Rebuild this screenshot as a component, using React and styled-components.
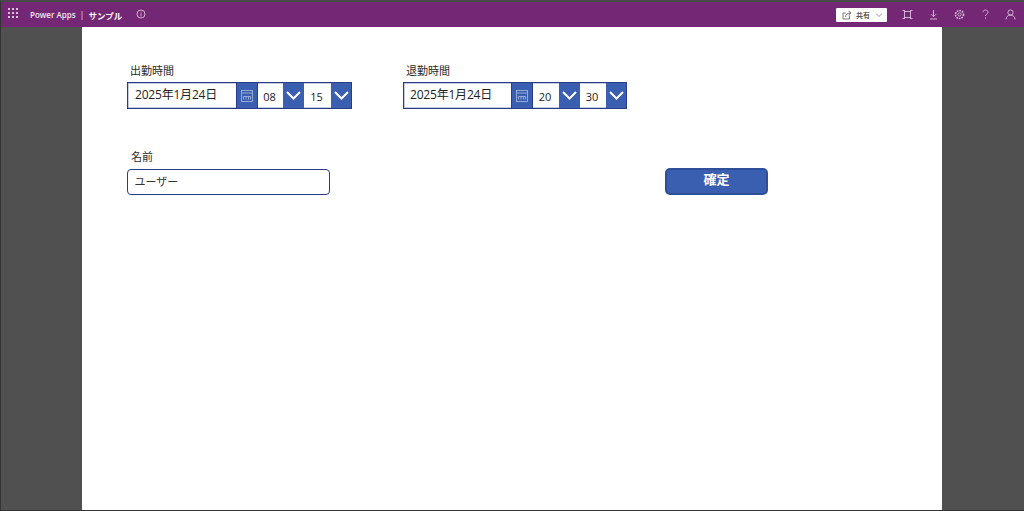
import React from 'react';
import styled, { createGlobalStyle } from 'styled-components';

const GlobalStyle = createGlobalStyle`
  html, body {
    margin: 0;
    padding: 0;
    height: 100%;
    overflow: hidden;
    background: #505050;
  }
  #root {
    height: 100%;
  }
`;

const Frame = styled.div`
  width: 1024px;
  height: 511px;
  box-sizing: border-box;
  display: flex;
  flex-direction: column;
  border-top: 2px solid #4a4a4a;
  border-left: 1px solid #333;
  border-bottom: 1px solid #333;
  background: #505050;
  font-family: 'Open Sans', 'Noto Sans CJK JP', sans-serif;
`;

const TopBar = styled.header`
  height: 25px;
  flex-shrink: 0;
  display: flex;
  align-items: center;
  background: #742774;
  color: #fff;
`;

const Waffle = styled.svg`
  width: 10px;
  height: 10px;
  margin: 0 0 3px 7px;
  fill: #d9bfd9;
`;

const Product = styled.span`
  margin-left: 12px;
  font-size: 8px;
  font-weight: 600;
  color: #f0e6f0;
`;

const Divider = styled.span`
  margin: 0 4px;
  font-size: 9px;
  color: #e6d3e6;
`;

const AppName = styled.span`
  font-size: 8.5px;
  font-weight: 700;
  font-family: 'Noto Sans CJK JP', sans-serif;
`;

const InfoIcon = styled.svg`
  width: 10px;
  height: 10px;
  margin: 0 0 2px 14px;
  fill: none;
  stroke: #d9bfd9;
  stroke-width: 0.9;
`;

const Actions = styled.div`
  margin-left: auto;
  display: flex;
  align-items: center;
`;

const ShareButton = styled.button`
  width: 51px;
  height: 14px;
  padding: 0 0 0 6px;
  margin-right: 15px;
  border: none;
  border-radius: 1px;
  background: #fff;
  display: flex;
  align-items: center;
  gap: 4px;
  font-family: 'Noto Sans CJK JP', sans-serif;
  font-size: 7px;
  font-weight: 500;
  color: #333;
`;

const ShareIcon = styled.svg`
  width: 10px;
  height: 10px;
  fill: none;
  stroke: #555;
  stroke-width: 0.8;
`;

const ShareChevron = styled.svg`
  width: 8px;
  height: 8px;
  margin-left: 1px;
  fill: none;
  stroke: #777;
  stroke-width: 0.8;
`;

const ActionIcon = styled.svg`
  width: 11px;
  height: 11px;
  margin-right: ${props => props.$gap}px;
  fill: none;
  stroke: #d9bfd9;
  stroke-width: 0.9;
`;

const Body = styled.main`
  flex: 1;
  display: flex;
  justify-content: center;
  min-height: 0;
  padding-right: 1px;
`;

const Canvas = styled.div`
  width: 860px;
  box-sizing: border-box;
  background: #fff;
  padding: 36px 0 0 45px;
  display: flex;
  flex-direction: column;
  gap: 40px;
`;

const Row = styled.div`
  display: flex;
  align-items: flex-end;
`;

const Field = styled.div`
  display: flex;
  flex-direction: column;
  margin-right: ${props => props.$gap || 0}px;
`;

const Label = styled.label`
  height: ${props => props.$height || 19}px;
  padding-left: ${props => props.$indent || 3}px;
  font-size: 11px;
  line-height: 16px;
  color: #2b2b2b;
`;

const DateControl = styled.div`
  display: flex;
  height: 27px;
  box-sizing: border-box;
  border: 1px solid #2b3a85;
  box-shadow: inset 0 0 0 0.5px #8f98c6;
`;

const DateText = styled.div`
  width: ${props => props.$width}px;
  box-sizing: border-box;
  padding-left: ${props => props.$pad}px;
  font-size: 12px;
  letter-spacing: -0.2px;
  line-height: 23px;
  color: #222;
`;

const CalendarButton = styled.div`
  width: 20px;
  background: #3a5fb0;
  border: 1px solid #2b3a85;
  border-width: 0 1px;
  display: flex;
  align-items: center;
  justify-content: center;
`;

const CalendarIcon = styled.svg`
  width: 12px;
  height: 12px;
  fill: none;
  stroke: #a9bbdf;
  stroke-width: 0.8;
`;

const TimeText = styled.div`
  width: ${props => props.$width}px;
  box-sizing: border-box;
  padding-right: 2px;
  text-align: center;
  font-size: 11px;
  line-height: 27px;
  color: #222;
`;

const ChevronButton = styled.div`
  width: ${props => props.$width}px;
  background: #3a5fb0;
  display: flex;
  align-items: center;
  justify-content: center;
`;

const ChevronIcon = styled.svg`
  width: 15px;
  height: 9px;
  fill: none;
  stroke: #fff;
  stroke-width: 2;
`;

const TextInput = styled.div`
  width: 203px;
  height: 26px;
  box-sizing: border-box;
  padding-left: 6.5px;
  border: 1.5px solid #2b3a85;
  border-radius: 4px;
  font-size: 11px;
  line-height: 23px;
  color: #333;
  font-family: 'Noto Sans CJK JP', sans-serif;
`;

const SubmitButton = styled.button`
  width: 103px;
  height: 27px;
  padding: 0 0 6px;
  border: 2px solid #2f4f9a;
  border-radius: 5px;
  background: #3a5fb0;
  color: #fff;
  font-family: 'Noto Sans CJK JP', sans-serif;
  font-size: 13px;
  line-height: 16px;
  font-weight: 700;
`;

const Chevron = () => (
  <ChevronIcon viewBox="0 0 15 9">
    <path d="M1 1l6.5 6.5L14 1" />
  </ChevronIcon>
);

const DateTimeField = ({ label, hour, minute, dateWidth, datePad, gap, hourWidth, minuteWidth }) => (
  <Field $gap={gap}>
    <Label>{label}</Label>
    <DateControl>
      <DateText $width={dateWidth} $pad={datePad}>2025年1月24日</DateText>
      <CalendarButton>
        <CalendarIcon viewBox="0 0 12 12">
          <rect x="0.5" y="0.5" width="11" height="11" />
          <path d="M0.5 3h11M2.5 9.5v-3h7v3M5 6.5v3M7.5 6.5v3" />
        </CalendarIcon>
      </CalendarButton>
      <TimeText $width={hourWidth}>{hour}</TimeText>
      <ChevronButton $width={21}><Chevron /></ChevronButton>
      <TimeText $width={minuteWidth}>{minute}</TimeText>
      <ChevronButton $width={20}><Chevron /></ChevronButton>
    </DateControl>
  </Field>
);

const App = () => (
  <>
    <GlobalStyle />
    <Frame>
      <TopBar>
        <Waffle viewBox="0 0 10 10">
          {[0, 4, 8].map(y => [0, 4, 8].map(x => (
            <rect key={`${x}-${y}`} x={x} y={y} width="2" height="2" />
          )))}
        </Waffle>
        <Product>Power Apps</Product>
        <Divider>|</Divider>
        <AppName>サンプル</AppName>
        <InfoIcon viewBox="0 0 10 10">
          <circle cx="5" cy="5" r="4" />
          <path d="M5 2.6v.8M5 4.2v3.2" />
        </InfoIcon>
        <Actions>
          <ShareButton>
            <ShareIcon viewBox="0 0 10 10">
              <path d="M7.5 5.5V9H1V3h2.5M3.5 7C3.8 4.5 5.5 3 8.5 3M6.5 1l2.5 2-2.5 2" />
            </ShareIcon>
            共有
            <ShareChevron viewBox="0 0 8 8">
              <path d="M1 2.5l3 3 3-3" />
            </ShareChevron>
          </ShareButton>
          <ActionIcon $gap={15} viewBox="0 0 11 11">
            <path d="M2 2.5h7M2 8.5h7M2.5 2v7M8.5 2v7M0.5 1.5h2.5M8 1.5h2.5M0.5 9.5h2.5M8 9.5h2.5" />
          </ActionIcon>
          <ActionIcon $gap={15} viewBox="0 0 11 11">
            <path d="M5.5 1v6.5M3 5.2l2.5 2.5L8 5.2M2 10h7" />
          </ActionIcon>
          <ActionIcon $gap={15} viewBox="0 0 11 11">
            <circle cx="5.5" cy="5.5" r="1.6" />
            <circle cx="5.5" cy="5.5" r="4" strokeDasharray="1.6 1" strokeWidth="1.6" />
          </ActionIcon>
          <ActionIcon $gap={14} viewBox="0 0 11 11">
            <path d="M3 3.2C3 1.8 4.2 1 5.5 1S8 1.9 8 3.2C8 5 5.5 5 5.5 7M5.5 8.5v1.2" />
          </ActionIcon>
          <ActionIcon $gap={8} viewBox="0 0 11 11">
            <circle cx="5.5" cy="3.5" r="2.6" />
            <path d="M1 10.5c0-2.5 1.8-4.4 4.5-4.4s4.5 1.9 4.5 4.4" />
          </ActionIcon>
        </Actions>
      </TopBar>
      <Body>
        <Canvas>
          <Row>
            <DateTimeField label="出勤時間" hour="08" minute="15" dateWidth={108} datePad={7} gap={51} hourWidth={25} minuteWidth={27} />
            <DateTimeField label="退勤時間" hour="20" minute="30" dateWidth={107} datePad={6} hourWidth={26} minuteWidth={26} />
          </Row>
          <Row>
            <Field $gap={335}>
              <Label $height={20} $indent={4}>名前</Label>
              <TextInput>ユーザー</TextInput>
            </Field>
            <SubmitButton>確定</SubmitButton>
          </Row>
        </Canvas>
      </Body>
    </Frame>
  </>
);

export default App;
